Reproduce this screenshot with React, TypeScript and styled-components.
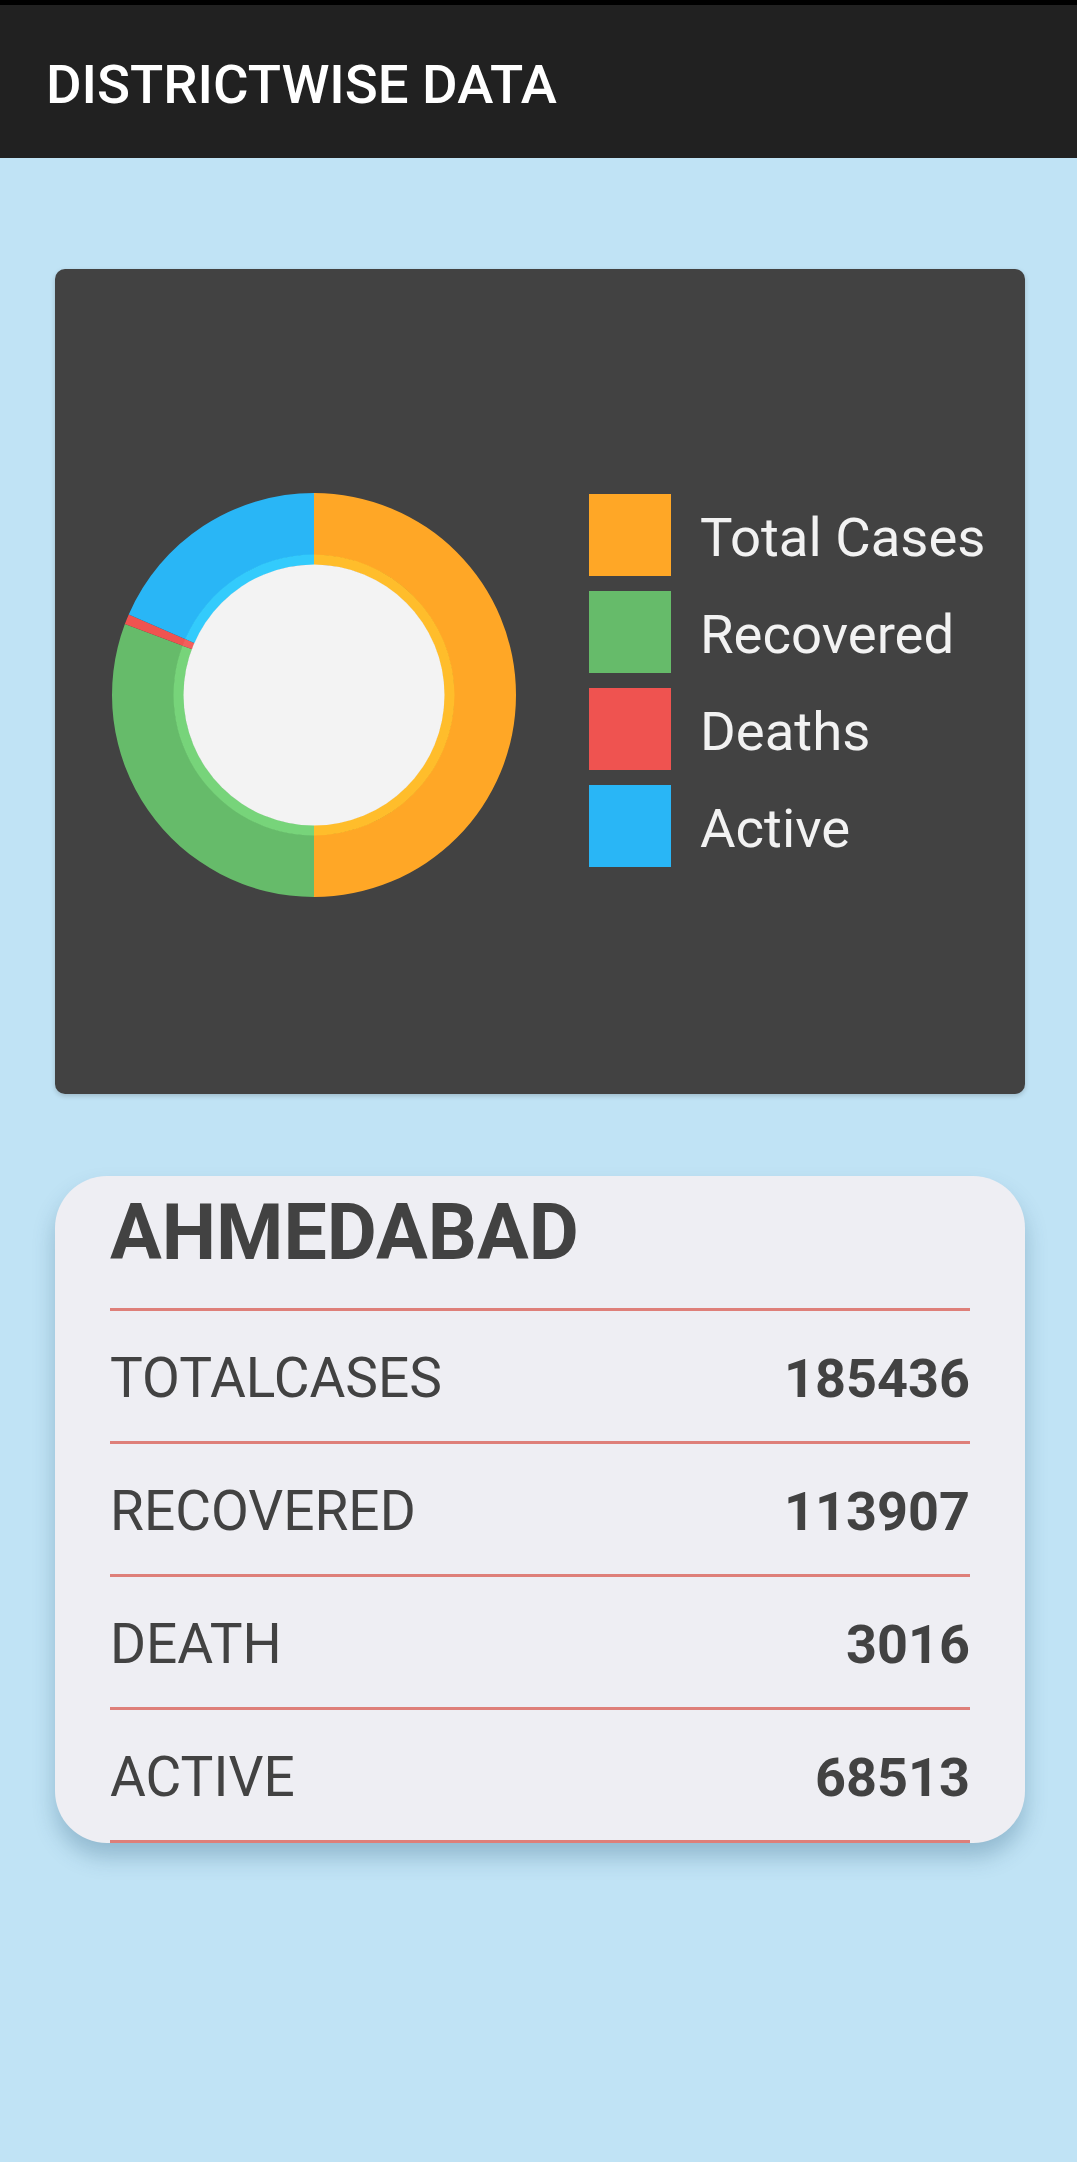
import React from "react";
import styled, { createGlobalStyle } from "styled-components";

const GlobalStyle = createGlobalStyle`
  html, body { margin: 0; padding: 0; }
  body {
    background: #c0e3f5;
    font-family: Roboto, "Liberation Sans", Arial, sans-serif;
  }
`;

const Page = styled.div`
  min-height: 2162px;
  background: #c0e3f5;
`;

const StatusStrip = styled.div`
  height: 5px;
  background: #000;
`;

const AppBar = styled.header`
  height: 153px;
  background: #212121;
  display: flex;
  align-items: center;
  padding: 6px 0 0 46px;
  box-sizing: border-box;
`;

const AppTitle = styled.h1`
  margin: 0;
  color: #ffffff;
  font-family: Roboto, "Liberation Sans", sans-serif;
  font-weight: 500;
  font-size: 54.5px;
  line-height: 1;
`;

const Content = styled.main`
  padding: 111px 52px 0 55px;
`;

const ChartCard = styled.section`
  height: 825px;
  box-sizing: border-box;
  background: #424242;
  border-radius: 10px;
  padding: 224px 0 0 57px;
  display: flex;
  align-items: flex-start;
  gap: 73px;
  box-shadow: 0 2px 5px rgba(0, 0, 0, 0.18);
`;

const Legend = styled.ul`
  list-style: none;
  margin: 0;
  padding: 1px 0 0;
  display: flex;
  flex-direction: column;
  gap: 15px;
`;

const LegendItem = styled.li`
  display: flex;
  align-items: center;
  gap: 29px;
  height: 82px;
`;

const Swatch = styled.span<{ $color: string }>`
  width: 82px;
  height: 82px;
  background: ${(p) => p.$color};
  flex: none;
`;

const LegendLabel = styled.span`
  color: #f2f2f2;
  font-size: 54.5px;
  font-family: Roboto, "Liberation Sans", sans-serif;
  line-height: 1;
  padding-top: 4px;
`;

const StatsCard = styled.section`
  margin-top: 82px;
  background: #eeeef3;
  border-radius: 52px;
  padding: 19px 55px 0;
  box-shadow: 0 14px 22px rgba(30, 80, 110, 0.28);
`;

const District = styled.h2`
  margin: 0 0 37px;
  color: #424242;
  font-family: Roboto, "Liberation Sans", sans-serif;
  font-weight: 700;
  font-size: 77px;
  line-height: 76px;
`;

const Divider = styled.div`
  height: 3px;
  background: #de7f79;
`;

const Row = styled.div`
  height: 130px;
  box-sizing: border-box;
  padding-top: 4px;
  display: flex;
  align-items: center;
  justify-content: space-between;
  color: #424242;
  font-family: Roboto, "Liberation Sans", sans-serif;
`;

const RowLabel = styled.span`
  font-weight: 400;
  font-size: 55px;
`;

const RowValue = styled.span`
  font-weight: 700;
  font-size: 54px;
`;

type Slice = { label: string; value: number; color: string; inner: string };

const slices: Slice[] = [
  { label: "Total Cases", value: 185436, color: "#ffa726", inner: "#ffbd2b" },
  { label: "Recovered", value: 113907, color: "#66bb6a", inner: "#77d47a" },
  { label: "Deaths", value: 3016, color: "#ef5350", inner: "#f25f5c" },
  { label: "Active", value: 68513, color: "#29b6f6", inner: "#33cbfc" },
];

const C = 202;

const pt = (r: number, a: number) => {
  const rad = (a * Math.PI) / 180;
  return [C + r * Math.sin(rad), C - r * Math.cos(rad)];
};

const sector = (r0: number, r1: number, a0: number, a1: number) => {
  const large = a1 - a0 > 180 ? 1 : 0;
  const [x0, y0] = pt(r1, a0);
  const [x1, y1] = pt(r1, a1);
  const [x2, y2] = pt(r0, a1);
  const [x3, y3] = pt(r0, a0);
  return `M${x0} ${y0} A${r1} ${r1} 0 ${large} 1 ${x1} ${y1} L${x2} ${y2} A${r0} ${r0} 0 ${large} 0 ${x3} ${y3} Z`;
};

const Donut: React.FC = () => {
  const total = slices.reduce((s, d) => s + d.value, 0);
  let start = 0;
  const parts = slices.map((d) => {
    const sweep = (d.value / total) * 360;
    const seg = { ...d, a0: start, a1: start + sweep };
    start += sweep;
    return seg;
  });
  return (
    <svg width={404} height={404} viewBox="0 0 404 404">
      {parts.map((p) => (
        <path key={p.label} d={sector(140, 202, p.a0, p.a1)} fill={p.color} />
      ))}
      {parts.map((p) => (
        <path key={p.label + "i"} d={sector(130, 140.5, p.a0, p.a1)} fill={p.inner} />
      ))}
      <circle cx={C} cy={C} r={130.5} fill="#f3f3f3" />
    </svg>
  );
};

const stats = [
  { label: "TOTALCASES", value: "185436" },
  { label: "RECOVERED", value: "113907" },
  { label: "DEATH", value: "3016" },
  { label: "ACTIVE", value: "68513" },
];

export default function App() {
  return (
    <Page>
      <GlobalStyle />
      <StatusStrip />
      <AppBar>
        <AppTitle>DISTRICTWISE DATA</AppTitle>
      </AppBar>
      <Content>
        <ChartCard>
          <Donut />
          <Legend>
            {slices.map((s) => (
              <LegendItem key={s.label}>
                <Swatch $color={s.color} />
                <LegendLabel>{s.label}</LegendLabel>
              </LegendItem>
            ))}
          </Legend>
        </ChartCard>
        <StatsCard>
          <District>AHMEDABAD</District>
          <Divider />
          {stats.map((s) => (
            <React.Fragment key={s.label}>
              <Row>
                <RowLabel>{s.label}</RowLabel>
                <RowValue>{s.value}</RowValue>
              </Row>
              <Divider />
            </React.Fragment>
          ))}
        </StatsCard>
      </Content>
    </Page>
  );
}
